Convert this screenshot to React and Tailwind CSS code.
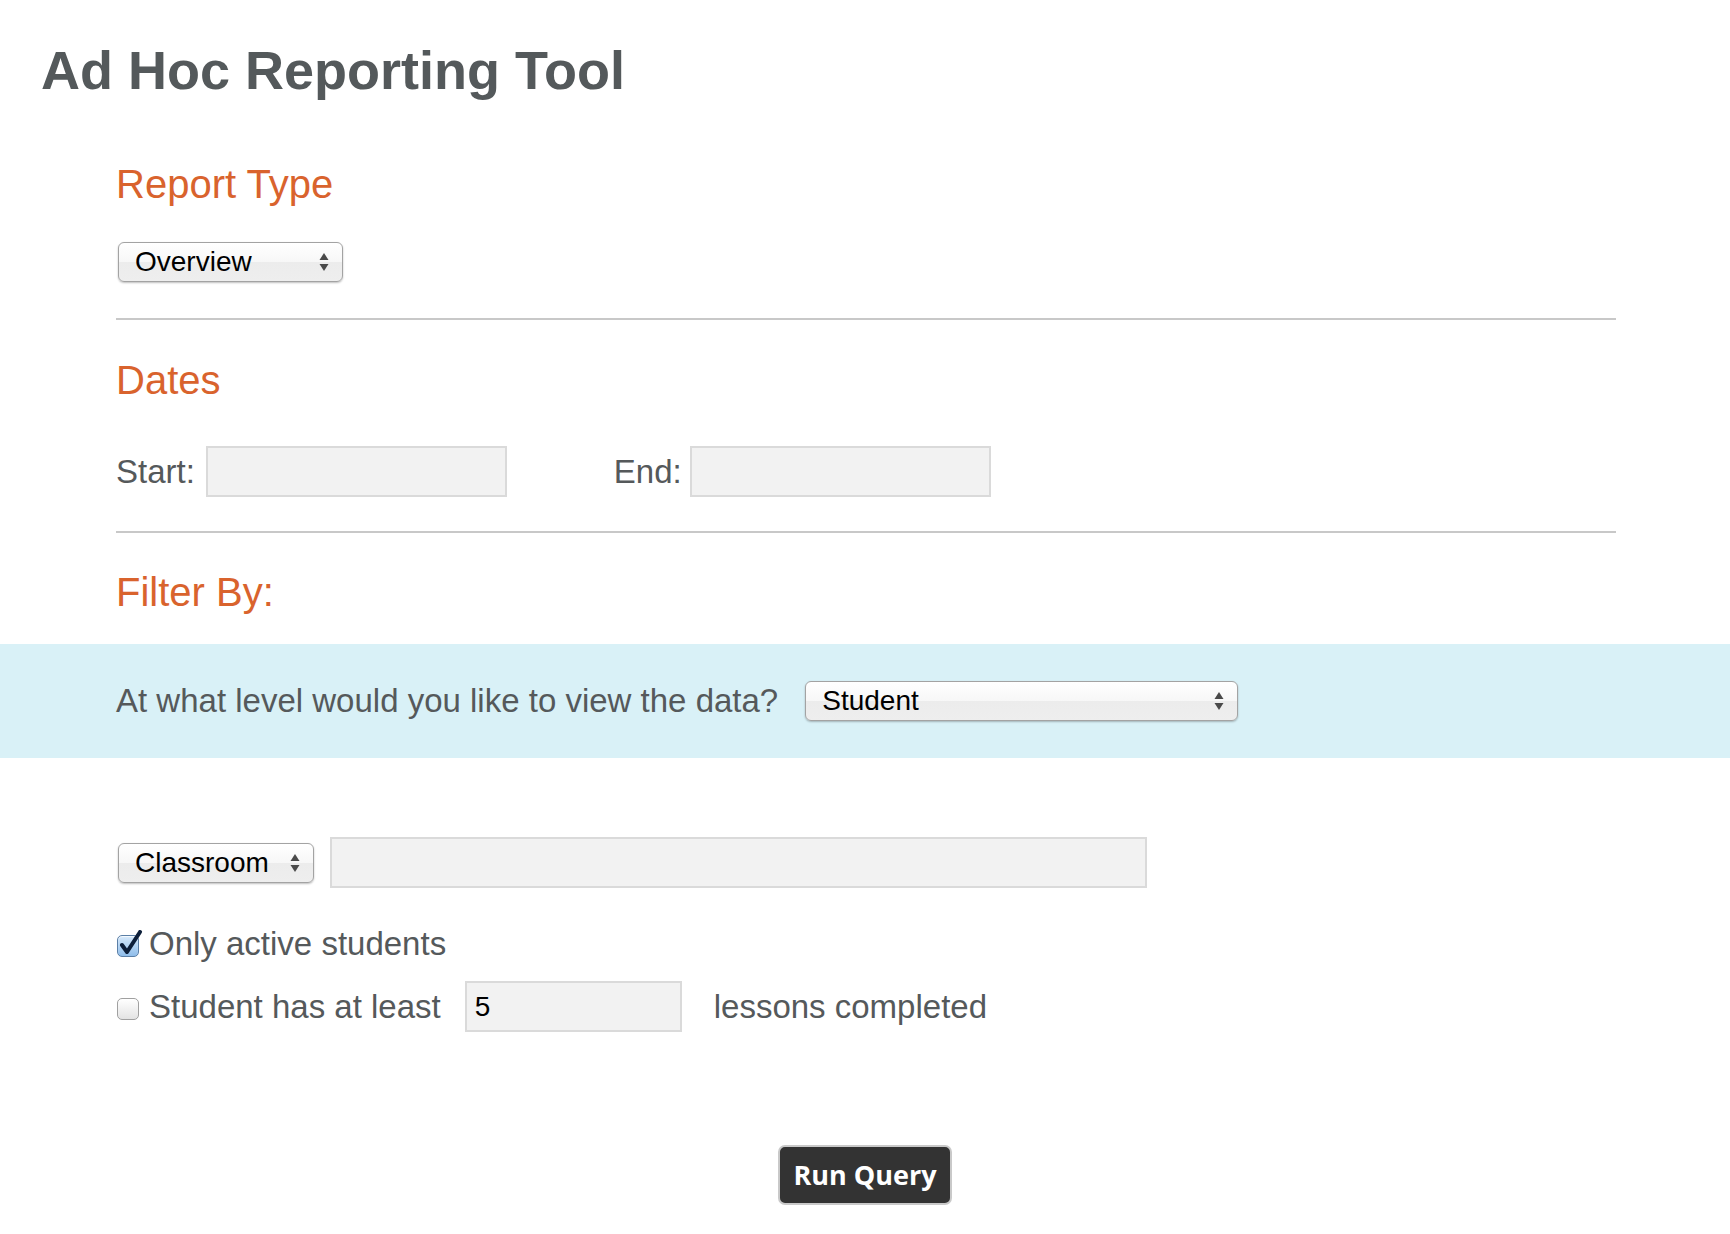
import { useState } from 'react';

// small up/down arrows drawn at the right of the native-looking selects
function SelectArrows() {
  return (
    <svg width="10" height="22" viewBox="0 0 10 22" className="absolute right-[14px] top-1/2 -translate-y-1/2 pointer-events-none">
      <path d="M5 2 L9.5 9 L0.5 9 Z" fill="#4a4a4a" />
      <path d="M0.5 13 L9.5 13 L5 20 Z" fill="#4a4a4a" />
    </svg>
  );
}

function FakeSelect({ value, options, onChange, width }) {
  return (
    <div className={`relative h-[40px] ${width}`}>
      <select
        value={value}
        onChange={(e) => onChange(e.target.value)}
        className="block appearance-none w-full h-full pl-[16px] pr-[34px] text-[28px] leading-none text-black rounded-[6px] border border-[#a3a3a3] bg-[linear-gradient(#ffffff_0%,#f7f7f7_50%,#ececec_51%,#eeeeee_100%)] shadow-[0_1px_2px_rgba(0,0,0,0.25)] outline-none"
      >
        {options.map((o) => (
          <option key={o}>{o}</option>
        ))}
      </select>
      <SelectArrows />
    </div>
  );
}

function Checkbox({ checked, onChange }) {
  return (
    <button
      type="button"
      onClick={() => onChange(!checked)}
      className={`relative w-[22px] h-[22px] mt-[4px] ml-[1px] rounded-[5px] border shrink-0 ${
        checked
          ? 'border-[#5b7fa6] bg-[linear-gradient(#d6e9fb,#8fbdea)]'
          : 'border-[#a0a0a0] bg-[linear-gradient(#ffffff,#e3e3e3)]'
      } shadow-[inset_0_1px_1px_rgba(255,255,255,0.8)]`}
    >
      {checked && (
        <svg width="24" height="26" viewBox="0 0 24 26" className="absolute left-[1px] top-[-6px]">
          <path d="M3 15 L8 22 L21 2" fill="none" stroke="#0d1f3a" strokeWidth="4" strokeLinecap="round" strokeLinejoin="round" />
        </svg>
      )}
    </button>
  );
}

const sectionHeading = 'text-[40px] leading-[44px] text-[#d9632d]';
const textInput = 'h-[51px] bg-[#f2f2f2] border-2 border-[#dadada] px-[8px] text-[28px] text-black outline-none';

export default function App() {
  const [reportType, setReportType] = useState('Overview');
  const [level, setLevel] = useState('Student');
  const [filterType, setFilterType] = useState('Classroom');
  const [onlyActive, setOnlyActive] = useState(true);
  const [minLessons, setMinLessons] = useState(false);
  const [lessons, setLessons] = useState('5');

  return (
    <div className="min-h-screen bg-white text-[#55595b] font-['Liberation_Sans',Arial,sans-serif]">
      <h1 className="pl-[41px] pt-[38px] text-[54px] leading-[64px] font-bold text-[#54595b]">
        Ad Hoc Reporting Tool
      </h1>

      <div className="pl-[116px]">
        <div className="w-[1500px]">
          <h2 className={`mt-[60px] ${sectionHeading}`}>Report Type</h2>
          <div className="mt-[36px] ml-[2px]">
            <FakeSelect
              value={reportType}
              onChange={setReportType}
              options={['Overview', 'Detail', 'Usage']}
              width="w-[225px]"
            />
          </div>
          <hr className="mt-[36px] border-0 h-[2px] bg-[#c8c8c8]" />

          <h2 className={`mt-[38px] ${sectionHeading}`}>Dates</h2>
          <div className="mt-[44px] flex items-center text-[33px]">
            <span>Start:</span>
            <input className={`ml-[11px] w-[301px] ${textInput}`} />
            <span className="ml-[107px]">End:</span>
            <input className={`ml-[8px] w-[301px] ${textInput}`} />
          </div>
          <hr className="mt-[34px] border-0 h-[2px] bg-[#c8c8c8]" />

          <h2 className={`mt-[37px] ${sectionHeading}`}>Filter By:</h2>
        </div>
      </div>

      <div className="mt-[30px] h-[114px] bg-[#d9f1f7] pl-[116px] flex items-center">
        <span className="text-[33px]">At what level would you like to view the data?</span>
        <div className="ml-[27px]">
          <FakeSelect
            value={level}
            onChange={setLevel}
            options={['Student', 'Classroom', 'School', 'District']}
            width="w-[433px]"
          />
        </div>
      </div>

      <div className="pl-[116px] text-[33px]">
        <div className="mt-[79px] flex items-center">
          <div className="ml-[2px]">
            <FakeSelect
              value={filterType}
              onChange={setFilterType}
              options={['Classroom', 'School', 'Teacher']}
              width="w-[196px]"
            />
          </div>
          <input className={`ml-[16px] w-[817px] ${textInput}`} />
        </div>

        <div className="mt-[36px] h-[40px] flex items-center">
          <Checkbox checked={onlyActive} onChange={setOnlyActive} />
          <span className="ml-[10px]">Only active students</span>
        </div>

        <div className="mt-[17px] flex items-center">
          <Checkbox checked={minLessons} onChange={setMinLessons} />
          <span className="ml-[10px]">Student has at least</span>
          <input
            value={lessons}
            onChange={(e) => setLessons(e.target.value)}
            className={`ml-[24px] w-[217px] ${textInput}`}
          />
          <span className="ml-[32px]">lessons completed</span>
        </div>
      </div>

      <div className="mt-[113px] pb-[30px] flex justify-center">
        <button className="h-[60px] px-[13px] rounded-[7px] bg-[#333333] border-2 border-[#c9c9c9] text-white text-[27px] font-bold font-['Open_Sans',sans-serif]">
          Run Query
        </button>
      </div>
    </div>
  );
}
